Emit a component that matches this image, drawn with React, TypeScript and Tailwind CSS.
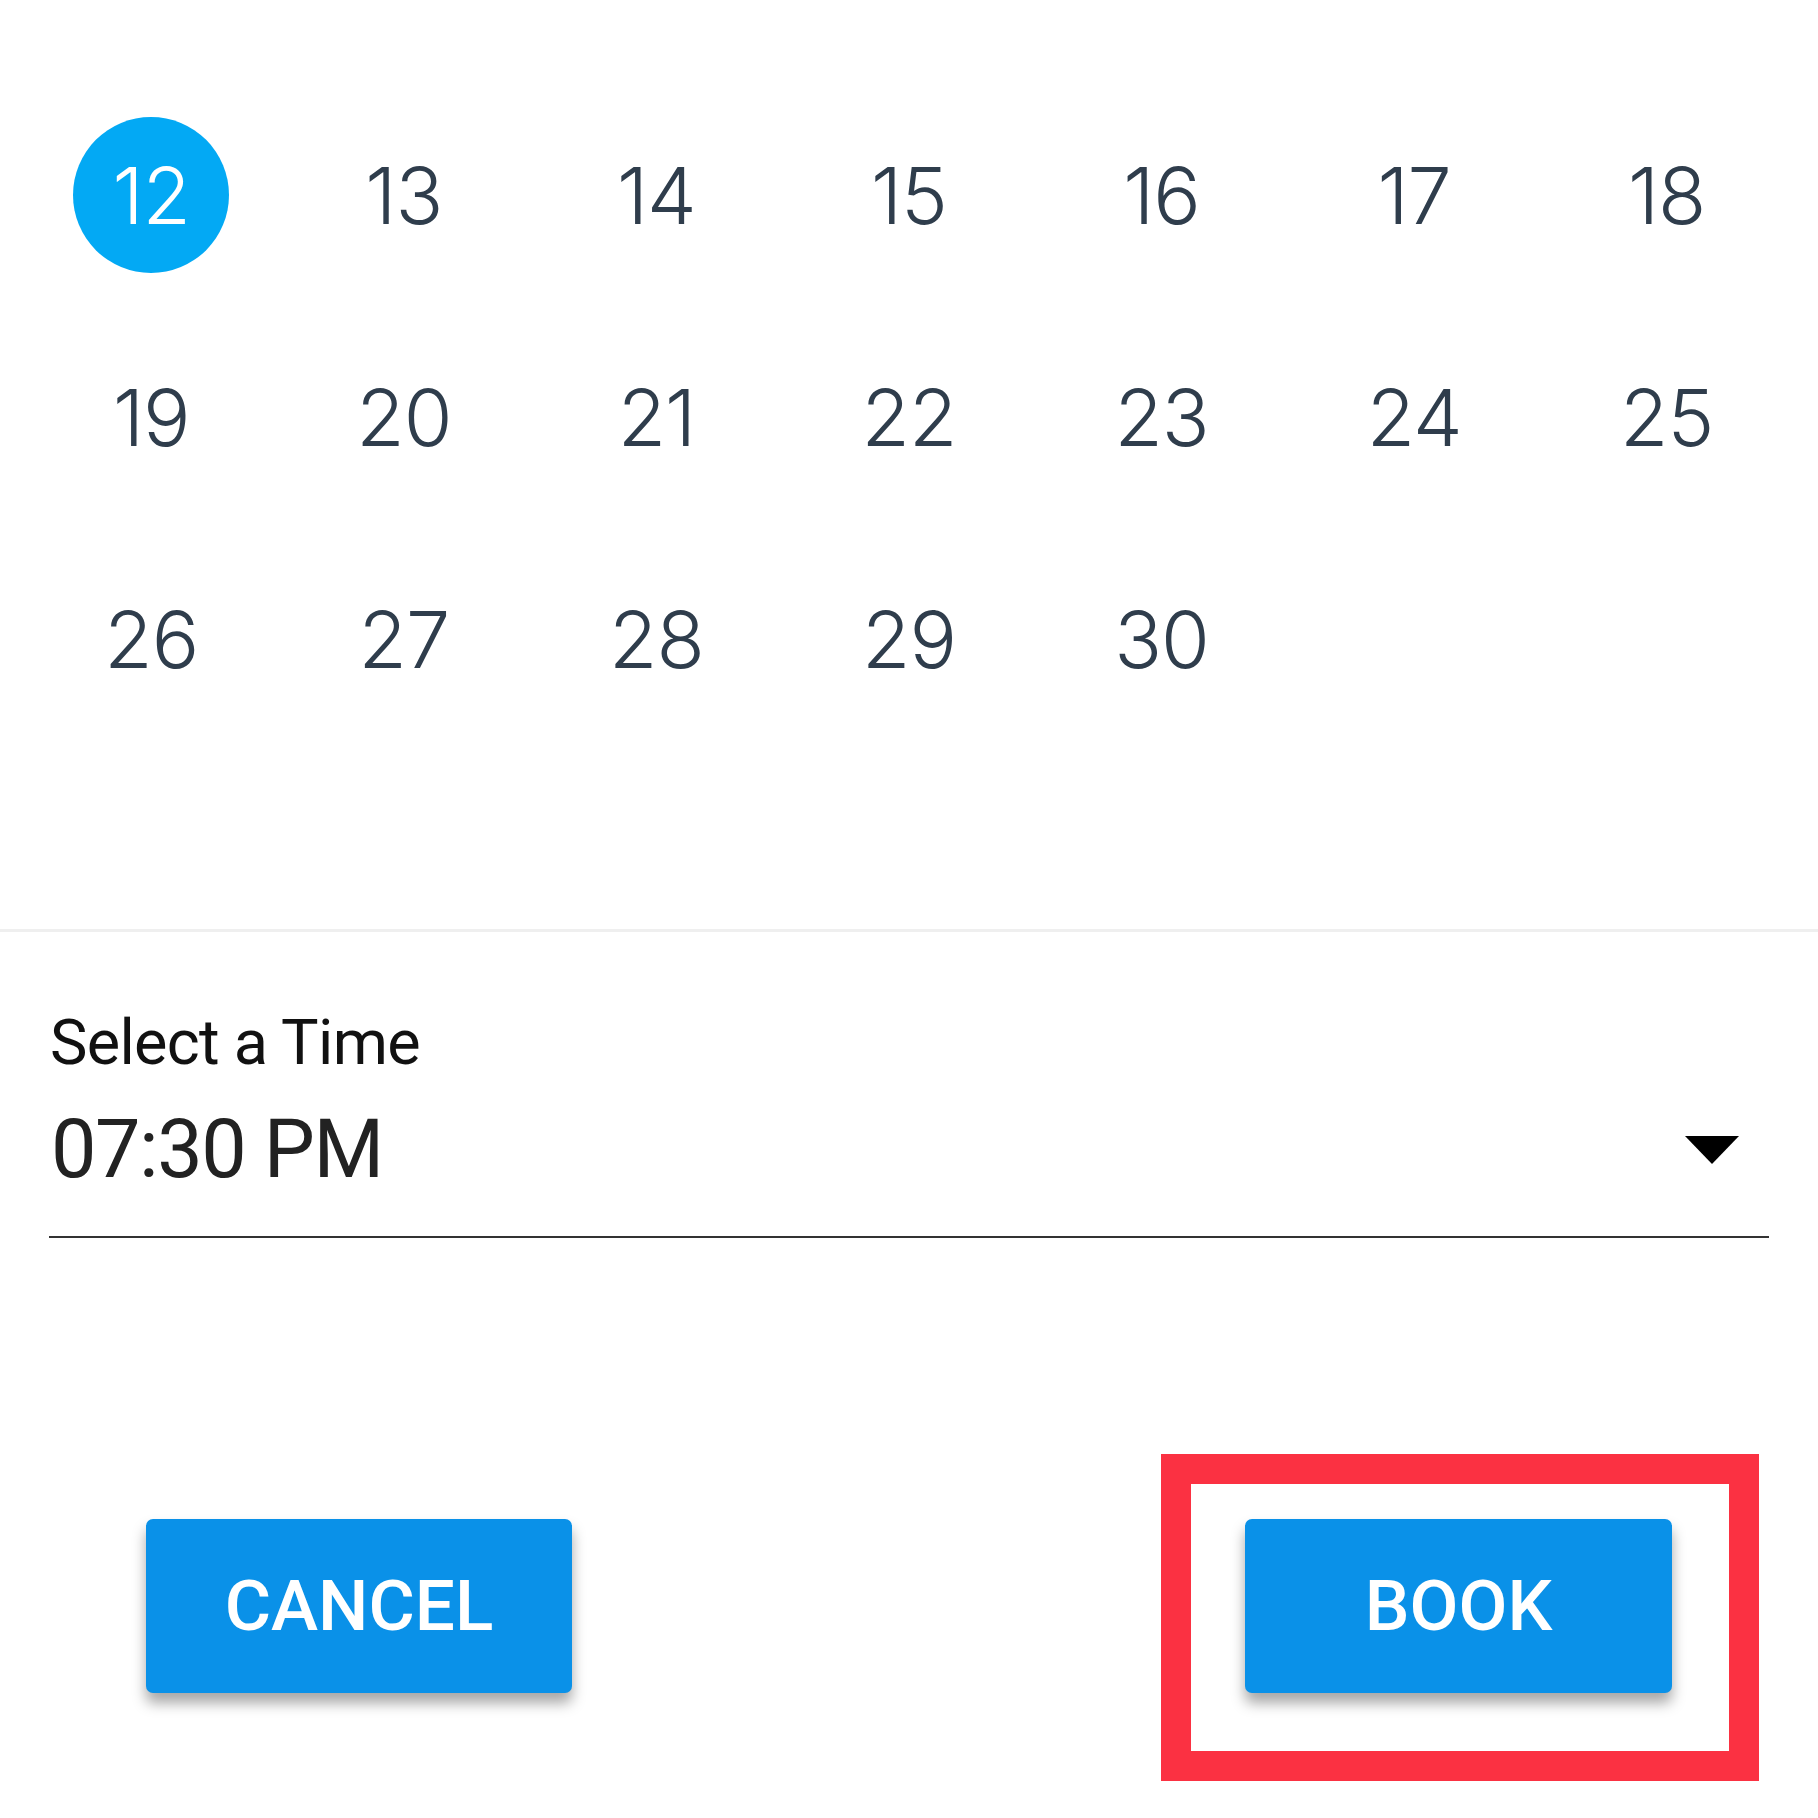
import React from 'react';

const rows: (number | null)[][] = [
  [12, 13, 14, 15, 16, 17, 18],
  [19, 20, 21, 22, 23, 24, 25],
  [26, 27, 28, 29, 30, null, null],
];

const selectedDay = 12;

function DayCell({ day }: { day: number | null }) {
  if (day === null) return <div className="h-[222px]" />;
  const selected = day === selectedDay;
  return (
    <div className="h-[222px] flex items-center justify-center">
      {selected ? (
        <div className="w-[156px] h-[156px] rounded-full bg-[#03a9f4] flex items-center justify-center text-white text-[79px] font-light leading-none tracking-[-1px]">
          {day}
        </div>
      ) : (
        <span className="text-[#2f3d4c] text-[79px] font-light leading-none tracking-[-1px]">{day}</span>
      )}
    </div>
  );
}

export default function App() {
  return (
    <div className="w-[1818px] h-[1818px] bg-white overflow-hidden font-['Inter',sans-serif]">
      {/* calendar days */}
      <div className="pt-[84px] px-[25px] grid grid-cols-7">
        {rows.flat().map((day, i) => (
          <DayCell key={i} day={day} />
        ))}
      </div>

      <div className="mt-[179px] h-[3px] bg-[#efefef]" />

      {/* time picker */}
      <div className="px-[49px] pt-[79px] font-['Roboto',sans-serif]">
        <div className="pl-[1px] text-[63px] leading-none tracking-[-0.7px] text-[#111]">Select a Time</div>
        <div className="mt-[35px] pb-[46px] border-b-2 border-[#333] flex items-center justify-between">
          <span className="pl-[2px] text-[81px] leading-none tracking-[-1.5px] text-[#222]">07:30 PM</span>
          <svg width="54" height="28" viewBox="0 0 54 28" className="mr-[30px]">
            <polygon points="0,0 54,0 27,28" fill="#000" />
          </svg>
        </div>
      </div>

      {/* actions */}
      <div className="mt-[216px] pl-[146px] pr-[59px] flex items-start justify-between font-['Roboto',sans-serif]">
        <button className="mt-[65px] w-[426px] h-[174px] rounded-[7px] bg-[#0a91e8] text-white text-[71px] font-medium shadow-[0_10px_14px_rgba(0,0,0,0.35)]">
          CANCEL
        </button>
        <div className="border-[30px] border-[#fb3142] pl-[54px] pr-[57px] pt-[35px] pb-[58px]">
          <button className="w-[427px] h-[174px] rounded-[7px] bg-[#0a91e8] text-white text-[71px] font-medium shadow-[0_10px_14px_rgba(0,0,0,0.35)]">
            BOOK
          </button>
        </div>
      </div>
    </div>
  );
}
